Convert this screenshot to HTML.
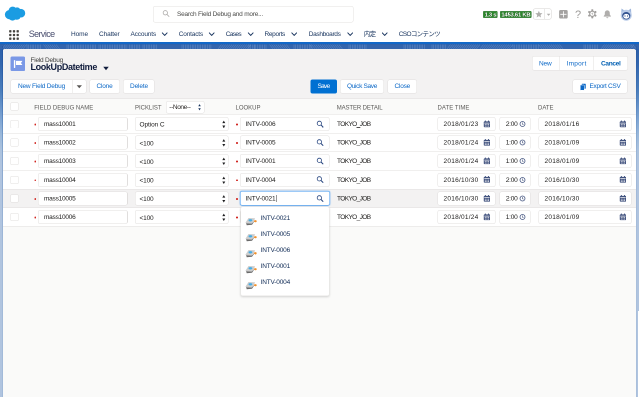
<!DOCTYPE html><html><head><meta charset="utf-8"><title>Field Debug</title><style>
html,body{margin:0;padding:0;}body{width:640px;height:400px;overflow:hidden;position:relative;background:#fff;font-family:"Liberation Sans", "Noto Sans CJK JP", sans-serif;}
#w{position:absolute;left:0;top:0;width:1280px;height:800px;transform:scale(0.5);transform-origin:0 0;overflow:hidden;will-change:transform;}
#w div,#w svg,#w span{position:absolute;box-sizing:border-box;}
#w span{white-space:nowrap;line-height:1;}
</style></head><body><div id="w">
<div style="left:0px;top:0px;width:1280px;height:84px;background:#fff;"></div>
<svg style="left:9px;top:12px" width="42" height="30" viewBox="0 0 21 15"><g fill="#1b9ce2"><circle cx="5" cy="8.6" r="4.6"/><circle cx="8.2" cy="4.8" r="4.2"/><circle cx="12.6" cy="5" r="3.6"/><circle cx="16.4" cy="7.2" r="4.3"/><circle cx="12.2" cy="9.6" r="4.2"/><circle cx="8" cy="10.4" r="4.2"/></g></svg>
<div style="left:306px;top:11.5px;width:401px;height:33px;background:#fff;border:1px solid #e2e0de;border-radius:4px;"></div>
<svg style="left:325px;top:20.4px" width="14" height="14" viewBox="0 0 14 14"><circle cx="5.6" cy="5.6" r="4.3" fill="none" stroke="#a8a6a4" stroke-width="1.5"/><path d="M8.8 8.8L13 13" stroke="#a8a6a4" stroke-width="1.6" stroke-linecap="round"/></svg>
<span class="t" style="left:354px;top:20.8px;font-size:13px;color:#4a4a48;letter-spacing:-0.41px;">Search Field Debug and more...</span>
<div style="left:966.4px;top:22px;width:28.6px;height:14px;background:#2e8c2e;border-radius:2px;border:1px solid #1d6a1d;box-shadow:inset 0 0 0 1px rgba(255,255,255,.25);"></div>
<span class="t" style="left:969.2px;top:23.19px;font-size:11.6px;color:#fff;font-weight:700;letter-spacing:-0.52px;text-shadow:0 0 2px #0b3a0b,0 0 1px #0b3a0b;">1.3 s</span>
<div style="left:1000px;top:22px;width:63px;height:14px;background:#2e8c2e;border-radius:2px;border:1px solid #1d6a1d;box-shadow:inset 0 0 0 1px rgba(255,255,255,.25);"></div>
<span class="t" style="left:1002.8px;top:23.19px;font-size:11.6px;color:#fff;font-weight:700;letter-spacing:-0.39px;text-shadow:0 0 2px #0b3a0b,0 0 1px #0b3a0b;">1453.61 KB</span>
<div style="left:1066px;top:17px;width:37px;height:22px;background:#fff;border:1px solid #d4d2d0;border-radius:4px;"></div>
<div style="left:1088px;top:17px;width:1px;height:22px;background:#d4d2d0;"></div>
<svg style="left:1069.6px;top:21.4px" width="15.4" height="14.6" viewBox="0 0 20 19"><path d="M10 0.5l2.6 6.3 6.8 0.5-5.2 4.4 1.6 6.6L10 14.8 4.2 18.3l1.6-6.6L0.6 7.3l6.8-0.5z" fill="#b0aeac"/></svg>
<svg style="left:1092.6px;top:27px" width="8.4" height="5.4" viewBox="0 0 8 5"><path d="M0.5 0.5h7L4 4.5z" fill="#b0aeac"/></svg>
<svg style="left:1118.4px;top:20px" width="17.6" height="17.2" viewBox="0 0 18 18"><rect x="0" y="0" width="18" height="18" rx="3" fill="#a3a1a0"/><path d="M9 2.500v13M2.500 9h13" stroke="#fff" stroke-width="1.700"/></svg>
<span class="t" style="left:1150px;top:17.59px;font-size:22px;color:#9c9a98;">?</span>
<svg style="left:1175.4px;top:18px" width="19.2" height="19.2" viewBox="0 0 20 20"><g fill="#a19f9d"><circle cx="10" cy="10" r="6.600"/><rect x="8" y="0.400" width="4" height="19.200" rx="1.200"/><rect x="8" y="0.400" width="4" height="19.200" rx="1.200" transform="rotate(60 10 10)"/><rect x="8" y="0.400" width="4" height="19.200" rx="1.200" transform="rotate(120 10 10)"/></g><circle cx="10" cy="10" r="4.300" fill="#fff"/><path d="M10.600 6.500l-2.600 4h1.900l-0.700 3 2.800-4.200h-2z" fill="#a19f9d"/></svg>
<svg style="left:1206px;top:19.6px" width="17.2" height="17.2" viewBox="0 0 18 18"><path d="M9 0.800c-3 0-5.200 2.300-5.200 5.300v3.300L1.600 12.600c-.4.600 0 1.400.8 1.400h13.200c.8 0 1.200-.8.800-1.400l-2.200-3.200V6.100C14.200 3.100 12 0.800 9 0.800z" fill="#b0aeac"/><path d="M6.800 15.200a2.200 2.200 0 0 0 4.400 0z" fill="#b0aeac"/></svg>
<svg style="left:1239px;top:15px" width="27" height="28" viewBox="0 0 27 28"><path d="M3.500 11l0.500-9 6.500 4.500zM23.500 11l-0.500-9-6.500 4.500z" fill="#9db5dc"/><circle cx="13.500" cy="15.500" r="11" fill="#b9cbe8"/><ellipse cx="13.500" cy="16.500" rx="8.200" ry="7.400" fill="#2f4f8e"/><ellipse cx="13.500" cy="17.600" rx="6" ry="4.800" fill="#fff"/><circle cx="11" cy="17" r="1.200" fill="#2f4f8e"/><circle cx="16" cy="17" r="1.200" fill="#2f4f8e"/></svg>
<svg style="left:18px;top:60px" width="20" height="20" viewBox="0 0 10 10"><rect x="0.15" y="0.15" width="2.300" height="2.300" rx="0.600" fill="#45433f"/><rect x="0.15" y="3.85" width="2.300" height="2.300" rx="0.600" fill="#45433f"/><rect x="0.15" y="7.550000000000001" width="2.300" height="2.300" rx="0.600" fill="#45433f"/><rect x="3.85" y="0.15" width="2.300" height="2.300" rx="0.600" fill="#45433f"/><rect x="3.85" y="3.85" width="2.300" height="2.300" rx="0.600" fill="#45433f"/><rect x="3.85" y="7.550000000000001" width="2.300" height="2.300" rx="0.600" fill="#45433f"/><rect x="7.550000000000001" y="0.15" width="2.300" height="2.300" rx="0.600" fill="#45433f"/><rect x="7.550000000000001" y="3.85" width="2.300" height="2.300" rx="0.600" fill="#45433f"/><rect x="7.550000000000001" y="7.550000000000001" width="2.300" height="2.300" rx="0.600" fill="#45433f"/></svg>
<span class="t" style="left:57.5px;top:58.77px;font-size:18px;color:#4b5070;letter-spacing:-1.22px;">Service</span>
<span class="t" style="left:142px;top:60.6px;font-size:13px;color:#16325c;letter-spacing:-0.17px;">Home</span>
<span class="t" style="left:198px;top:60.6px;font-size:13px;color:#16325c;letter-spacing:-0.23px;">Chatter</span>
<span class="t" style="left:261px;top:60.6px;font-size:13px;color:#16325c;letter-spacing:-0.31px;">Accounts</span>
<svg style="left:322.6px;top:64.4px" width="12.8" height="8.8" viewBox="0 0 6.4 4.4"><path d="M0.850 0.900L3.200 3.450L5.550 0.900" fill="none" stroke="#16325c" stroke-width="0.950" stroke-linecap="round" stroke-linejoin="round"/></svg>
<span class="t" style="left:357.5px;top:60.6px;font-size:13px;color:#16325c;letter-spacing:-0.35px;">Contacts</span>
<svg style="left:417.1px;top:64.4px" width="12.8" height="8.8" viewBox="0 0 6.4 4.4"><path d="M0.850 0.900L3.200 3.450L5.550 0.900" fill="none" stroke="#16325c" stroke-width="0.950" stroke-linecap="round" stroke-linejoin="round"/></svg>
<span class="t" style="left:451.5px;top:60.6px;font-size:13px;color:#16325c;letter-spacing:-1.27px;">Cases</span>
<svg style="left:494.6px;top:64.4px" width="12.8" height="8.8" viewBox="0 0 6.4 4.4"><path d="M0.850 0.900L3.200 3.450L5.550 0.900" fill="none" stroke="#16325c" stroke-width="0.950" stroke-linecap="round" stroke-linejoin="round"/></svg>
<span class="t" style="left:529px;top:60.6px;font-size:13px;color:#16325c;letter-spacing:-0.65px;">Reports</span>
<svg style="left:581.6px;top:64.4px" width="12.8" height="8.8" viewBox="0 0 6.4 4.4"><path d="M0.850 0.900L3.200 3.450L5.550 0.900" fill="none" stroke="#16325c" stroke-width="0.950" stroke-linecap="round" stroke-linejoin="round"/></svg>
<span class="t" style="left:617.5px;top:60.6px;font-size:13px;color:#16325c;letter-spacing:-0.66px;">Dashboards</span>
<svg style="left:693.6px;top:64.4px" width="12.8" height="8.8" viewBox="0 0 6.4 4.4"><path d="M0.850 0.900L3.200 3.450L5.550 0.900" fill="none" stroke="#16325c" stroke-width="0.950" stroke-linecap="round" stroke-linejoin="round"/></svg>
<span class="t" style="left:727.5px;top:60.6px;font-size:13px;color:#16325c;letter-spacing:-1.26px;">内定</span>
<svg style="left:762.6px;top:64.4px" width="12.8" height="8.8" viewBox="0 0 6.4 4.4"><path d="M0.850 0.900L3.200 3.450L5.550 0.900" fill="none" stroke="#16325c" stroke-width="0.950" stroke-linecap="round" stroke-linejoin="round"/></svg>
<span class="t" style="left:797.5px;top:60.6px;font-size:13px;color:#16325c;letter-spacing:-1.33px;">CSOコンテンツ</span>
<div style="left:0px;top:84px;width:1280px;height:716px;background:linear-gradient(180deg,#2b5ea7 4px,#3265ad 40px,#4a7dbb 96px,#6491c8 126px,#80a6d3 156px,#9ab8da 186px,#abc2de 216px,#b0c4df 250px);"></div>
<div style="left:0px;top:84px;width:1280px;height:4px;background:#1268c8;"></div>
<div style="left:0px;top:89px;width:1278px;height:9px;background:#3465ad;"></div>
<svg style="left:0px;top:89px" width="1280" height="9" viewBox="0 0 640 4.5"><path d="M2.0 4.500l3.5 -4.500M4.1 4.500l3.5 -4.500M6.2 4.500l3.5 -4.500M8.3 4.500l3.5 -4.500M10.4 4.500l3.5 -4.500M12.5 4.500l3.5 -4.500M14.6 4.500l3.5 -4.500M16.7 4.500l3.5 -4.500M18.8 4.500l3.5 -4.500M20.9 4.500l3.5 -4.500M23.0 4.500l3.5 -4.500M27.0 4.500l0 -4.500M28.7 4.500l0 -4.500M30.4 4.500l0 -4.500M32.1 4.500l0 -4.500M33.8 4.500l0 -4.500M35.5 4.500l0 -4.500M37.2 4.500l0 -4.500M38.9 4.500l0 -4.500M40.6 4.500l0 -4.500M47.0 4.500l-3.5 -4.500M49.1 4.500l-3.5 -4.500M51.2 4.500l-3.5 -4.500M53.3 4.500l-3.5 -4.500M55.4 4.500l-3.5 -4.500M57.5 4.500l-3.5 -4.500M59.6 4.500l-3.5 -4.500M67.0 4.500l0 -4.500M68.7 4.500l0 -4.500M70.4 4.500l0 -4.500M72.1 4.500l0 -4.500M73.8 4.500l0 -4.500M75.5 4.500l0 -4.500M77.2 4.500l0 -4.500M78.9 4.500l0 -4.500M80.6 4.500l0 -4.500M82.0 4.500l0 -4.500M83.7 4.500l0 -4.500M85.4 4.500l0 -4.500M87.1 4.500l0 -4.500M88.8 4.500l0 -4.500M90.5 4.500l0 -4.500M92.2 4.500l0 -4.500M93.9 4.500l0 -4.500M95.6 4.500l0 -4.500M99.0 4.500l0 -4.500M100.7 4.500l0 -4.500M102.4 4.500l0 -4.500M104.1 4.500l0 -4.500M105.8 4.500l0 -4.500M107.5 4.500l0 -4.500M109.2 4.500l0 -4.500M110.9 4.500l0 -4.500M112.6 4.500l0 -4.500M114.3 4.500l0 -4.500M116.0 4.500l0 -4.500M117.7 4.500l0 -4.500M119.4 4.500l0 -4.500M121.1 4.500l0 -4.500M122.8 4.500l0 -4.500M124.5 4.500l0 -4.500M126.0 4.500l0 -4.500M127.7 4.500l0 -4.500M129.4 4.500l0 -4.500M131.1 4.500l0 -4.500M132.8 4.500l0 -4.500M134.5 4.500l0 -4.500M136.2 4.500l0 -4.500M137.9 4.500l0 -4.500M139.6 4.500l0 -4.500M143.0 4.500l0 -4.500M144.7 4.500l0 -4.500M146.4 4.500l0 -4.500M148.1 4.500l0 -4.500M149.8 4.500l0 -4.500M151.5 4.500l0 -4.500M153.2 4.500l0 -4.500M154.9 4.500l0 -4.500M156.6 4.500l0 -4.500M182.0 4.500l0 -4.500M183.7 4.500l0 -4.500M185.4 4.500l0 -4.500M187.1 4.500l0 -4.500M188.8 4.500l0 -4.500M190.5 4.500l0 -4.500M192.2 4.500l0 -4.500M193.9 4.500l0 -4.500M195.6 4.500l0 -4.500M197.3 4.500l0 -4.500M199.0 4.500l0 -4.500M200.7 4.500l0 -4.500M202.4 4.500l0 -4.500M204.1 4.500l0 -4.500M205.8 4.500l0 -4.500M207.5 4.500l0 -4.500M209.2 4.500l0 -4.500M210.9 4.500l0 -4.500M218.0 4.500l3.5 -4.500M220.1 4.500l3.5 -4.500M222.2 4.500l3.5 -4.500M224.3 4.500l3.5 -4.500M226.4 4.500l3.5 -4.500M228.5 4.500l3.5 -4.500M230.6 4.500l3.5 -4.500M232.7 4.500l3.5 -4.500M234.8 4.500l3.5 -4.500M236.9 4.500l3.5 -4.500M239.0 4.500l3.5 -4.500M241.1 4.500l3.5 -4.500M243.2 4.500l3.5 -4.500M245.3 4.500l3.5 -4.500M247.4 4.500l3.5 -4.500M249.0 4.500l0 -4.500M250.7 4.500l0 -4.500M252.4 4.500l0 -4.500M254.1 4.500l0 -4.500M255.8 4.500l0 -4.500M257.5 4.500l0 -4.500M259.2 4.500l0 -4.500M260.9 4.500l0 -4.500M262.6 4.500l0 -4.500M264.3 4.500l0 -4.500M266.0 4.500l0 -4.500M273.0 4.500l-3.5 -4.500M275.1 4.500l-3.5 -4.500M277.2 4.500l-3.5 -4.500M279.3 4.500l-3.5 -4.500M281.4 4.500l-3.5 -4.500M283.5 4.500l-3.5 -4.500M285.6 4.500l-3.5 -4.500M287.7 4.500l-3.5 -4.500M289.8 4.500l-3.5 -4.500M294.0 4.500l0 -4.500M295.7 4.500l0 -4.500M297.4 4.500l0 -4.500M299.1 4.500l0 -4.500M300.8 4.500l0 -4.500M302.5 4.500l0 -4.500M304.2 4.500l0 -4.500M305.9 4.500l0 -4.500M307.6 4.500l0 -4.500M309.3 4.500l0 -4.500M311.0 4.500l0 -4.500M313.0 4.500l-3.5 -4.500M315.1 4.500l-3.5 -4.500M317.2 4.500l-3.5 -4.500M319.3 4.500l-3.5 -4.500M321.4 4.500l-3.5 -4.500M323.5 4.500l-3.5 -4.500M325.6 4.500l-3.5 -4.500M327.7 4.500l-3.5 -4.500M329.8 4.500l-3.5 -4.500M331.9 4.500l-3.5 -4.500M334.0 4.500l-3.5 -4.500M336.1 4.500l-3.5 -4.500M338.2 4.500l-3.5 -4.500M340.3 4.500l-3.5 -4.500M342.4 4.500l-3.5 -4.500M349.0 4.500l0 -4.500M350.7 4.500l0 -4.500M352.4 4.500l0 -4.500M354.1 4.500l0 -4.500M355.8 4.500l0 -4.500M357.5 4.500l0 -4.500M359.2 4.500l0 -4.500M360.9 4.500l0 -4.500M362.6 4.500l0 -4.500M364.3 4.500l0 -4.500M366.0 4.500l0 -4.500M404.0 4.500l0 -4.500M405.7 4.500l0 -4.500M407.4 4.500l0 -4.500M409.1 4.500l0 -4.500M410.8 4.500l0 -4.500M412.5 4.500l0 -4.500M414.2 4.500l0 -4.500M415.9 4.500l0 -4.500M417.6 4.500l0 -4.500M419.3 4.500l0 -4.500M421.0 4.500l0 -4.500M422.7 4.500l0 -4.500M424.4 4.500l0 -4.500M432.0 4.500l0 -4.500M433.7 4.500l0 -4.500M435.4 4.500l0 -4.500M437.1 4.500l0 -4.500M438.8 4.500l0 -4.500M440.5 4.500l0 -4.500M442.2 4.500l0 -4.500M443.9 4.500l0 -4.500M445.6 4.500l0 -4.500M447.0 4.500l3.5 -4.500M449.1 4.500l3.5 -4.500M451.2 4.500l3.5 -4.500M453.3 4.500l3.5 -4.500M455.4 4.500l3.5 -4.500M457.5 4.500l3.5 -4.500M459.6 4.500l3.5 -4.500M461.7 4.500l3.5 -4.500M463.8 4.500l3.5 -4.500M465.9 4.500l3.5 -4.500M468.0 4.500l3.5 -4.500M470.1 4.500l3.5 -4.500M472.2 4.500l3.5 -4.500M474.3 4.500l3.5 -4.500M476.4 4.500l3.5 -4.500M480.0 4.500l3.5 -4.500M482.1 4.500l3.5 -4.500M484.2 4.500l3.5 -4.500M486.3 4.500l3.5 -4.500M488.4 4.500l3.5 -4.500M490.5 4.500l3.5 -4.500M492.6 4.500l3.5 -4.500M494.7 4.500l3.5 -4.500M496.8 4.500l3.5 -4.500M498.9 4.500l3.5 -4.500M501.0 4.500l3.5 -4.500M503.1 4.500l3.5 -4.500M505.2 4.500l3.5 -4.500M507.3 4.500l3.5 -4.500M509.4 4.500l3.5 -4.500M513.0 4.500l0 -4.500M514.7 4.500l0 -4.500M516.4 4.500l0 -4.500M518.1 4.500l0 -4.500M519.8 4.500l0 -4.500M521.5 4.500l0 -4.500M523.2 4.500l0 -4.500M524.9 4.500l0 -4.500M526.6 4.500l0 -4.500M528.3 4.500l0 -4.500M530.0 4.500l0 -4.500M531.7 4.500l0 -4.500M533.4 4.500l0 -4.500M535.1 4.500l0 -4.500M536.8 4.500l0 -4.500M538.5 4.500l0 -4.500M542.0 4.500l-3.5 -4.500M544.1 4.500l-3.5 -4.500M546.2 4.500l-3.5 -4.500M548.3 4.500l-3.5 -4.500M550.4 4.500l-3.5 -4.500M552.5 4.500l-3.5 -4.500M554.6 4.500l-3.5 -4.500M556.7 4.500l-3.5 -4.500M558.8 4.500l-3.5 -4.500M560.9 4.500l-3.5 -4.500M563.0 4.500l-3.5 -4.500M584.0 4.500l0 -4.500M585.7 4.500l0 -4.500M587.4 4.500l0 -4.500M589.1 4.500l0 -4.500M590.8 4.500l0 -4.500M592.5 4.500l0 -4.500M594.2 4.500l0 -4.500M595.9 4.500l0 -4.500M597.6 4.500l0 -4.500M601.0 4.500l3.5 -4.500M603.1 4.500l3.5 -4.500M605.2 4.500l3.5 -4.500M607.3 4.500l3.5 -4.500M609.4 4.500l3.5 -4.500M611.5 4.500l3.5 -4.500M613.6 4.500l3.5 -4.500M615.7 4.500l3.5 -4.500M617.8 4.500l3.5 -4.500M619.9 4.500l3.5 -4.500M622.0 4.500l3.5 -4.500M624.1 4.500l3.5 -4.500M626.2 4.500l3.5 -4.500M628.3 4.500l3.5 -4.500M630.4 4.500l3.5 -4.500M634.0 4.500l-3.5 -4.500M636.1 4.500l-3.5 -4.500" stroke="#a9c0e2" stroke-width="0.500" opacity="0.420" fill="none"/></svg>
<div style="left:1278px;top:84px;width:2px;height:716px;background:#fff;"></div>
<div style="left:0px;top:794px;width:1280px;height:6px;background:#fff;"></div>
<div style="left:1276px;top:622px;width:4px;height:178px;background:#fff;"></div>
<div style="left:4px;top:92px;width:2.4px;height:702px;background:linear-gradient(180deg,rgba(20,70,150,.45),rgba(40,95,165,.3) 200px,rgba(60,110,175,.12) 420px);"></div>
<div style="left:1270.6px;top:92px;width:2.4px;height:702px;background:linear-gradient(180deg,rgba(20,70,150,.45),rgba(40,95,165,.3) 200px,rgba(60,110,175,.12) 420px);"></div>
<div style="left:6px;top:98px;width:1265px;height:696px;background:#fafaf9;border-radius:4px 4px 0 0;"></div>
<div style="left:6px;top:98px;width:1265px;height:100px;background:#f3f2f2;border-radius:4px 4px 0 0;border-bottom:1px solid #e0dedd;"></div>
<svg style="left:20.6px;top:113.2px" width="29.2" height="29.2" viewBox="0 0 28 28"><rect width="28" height="28" rx="3" fill="#7a98e6"/><rect x="6.500" y="7" width="2.600" height="15" rx="1" fill="#fff"/><path d="M10.500 8.500h11.500c.5 0 .7.500.4.900l-2.400 3 2.400 3c.3.400.1.900-.4.900H10.500z" fill="#fff"/></svg>
<span class="t" style="left:61px;top:113px;font-size:13px;color:#3e3e3c;letter-spacing:-0.46px;">Field Debug</span>
<span class="t" style="left:61px;top:124.77px;font-size:18px;color:#101c3c;font-weight:700;letter-spacing:-0.72px;">LookUpDatetime</span>
<svg style="left:205.5px;top:132.5px" width="12" height="8" viewBox="0 0 12 8"><path d="M0.500 0.500h11L6 7.500z" fill="#101c3c"/></svg>
<div style="left:1063.5px;top:112px;width:192px;height:29px;background:#fff;border:1px solid #e0dedd;border-radius:4px;"></div>
<div style="left:1118px;top:113px;width:1px;height:27px;background:#e0dedd;"></div>
<div style="left:1186px;top:113px;width:1px;height:27px;background:#e0dedd;"></div>
<span class="t" style="left:1078px;top:119.8px;font-size:13px;color:#0a67c6;letter-spacing:-0.34px;">New</span>
<span class="t" style="left:1133px;top:119.8px;font-size:13px;color:#0a67c6;letter-spacing:0.53px;">Import</span>
<span class="t" style="left:1202px;top:119.8px;font-size:13px;color:#005fb2;font-weight:700;letter-spacing:-0.61px;">Cancel</span>
<div style="left:21px;top:158.5px;width:124.5px;height:28.5px;background:#fff;border:1px solid #e0dedd;border-radius:4px;border-radius:4px 0 0 4px;"></div>
<div style="left:144.5px;top:158.5px;width:28px;height:28.5px;background:#fff;border:1px solid #e0dedd;border-radius:4px;border-radius:0 4px 4px 0;"></div>
<svg style="left:152.8px;top:169.6px" width="11.2" height="7.2" viewBox="0 0 10 6"><path d="M0.300 0.300h9.400L5 5.700z" fill="#5a5856"/></svg>
<span class="t" style="left:36px;top:164.6px;font-size:13px;color:#0a67c6;letter-spacing:-0.38px;">New Field Debug</span>
<div style="left:179px;top:158.5px;width:61px;height:28.5px;background:#fff;border:1px solid #e0dedd;border-radius:4px;"></div>
<span class="t" style="left:193px;top:164.6px;font-size:13px;color:#0a67c6;letter-spacing:-0.39px;">Clone</span>
<div style="left:246px;top:158.5px;width:63px;height:28.5px;background:#fff;border:1px solid #e0dedd;border-radius:4px;"></div>
<span class="t" style="left:260px;top:164.6px;font-size:13px;color:#0a67c6;letter-spacing:-0.26px;">Delete</span>
<div style="left:621px;top:158.5px;width:53px;height:28.5px;background:#0070d2;border-radius:4px;"></div>
<span class="t" style="left:635px;top:164.6px;font-size:13px;color:#fff;letter-spacing:-1.41px;">Save</span>
<div style="left:680px;top:158.5px;width:88px;height:28.5px;background:#fff;border:1px solid #e0dedd;border-radius:4px;"></div>
<span class="t" style="left:694px;top:164.6px;font-size:13px;color:#0a67c6;letter-spacing:-0.65px;">Quick Save</span>
<div style="left:775px;top:158.5px;width:59px;height:28.5px;background:#fff;border:1px solid #e0dedd;border-radius:4px;"></div>
<span class="t" style="left:789px;top:164.6px;font-size:13px;color:#0a67c6;letter-spacing:-0.45px;">Close</span>
<div style="left:1145px;top:158.5px;width:110px;height:28.5px;background:#fff;border:1px solid #e0dedd;border-radius:4px;"></div>
<span class="t" style="left:1179px;top:164.6px;font-size:13px;color:#0a67c6;letter-spacing:-0.59px;">Export CSV</span>
<svg style="left:1160px;top:167px" width="12" height="14" viewBox="0 0 12 14"><rect x="3.500" y="0.500" width="8" height="10" rx="1" fill="#0a67c6"/><rect x="0.500" y="3" width="8" height="10.500" rx="1" fill="#0a67c6" stroke="#fff" stroke-width="1"/></svg>
<div style="left:6px;top:198px;width:1265px;height:30.5px;background:#fafaf9;border-bottom:1px solid #e0dedd;"></div>
<div style="left:20.5px;top:205px;width:16px;height:16px;background:#fff;border:1px solid #e0dedd;border-radius:2px;"></div>
<span class="t" style="left:68.5px;top:209.05px;font-size:12px;color:#5a5957;letter-spacing:-0.00px;">FIELD DEBUG NAME</span>
<span class="t" style="left:270px;top:209.05px;font-size:12px;color:#5a5957;letter-spacing:-0.04px;">PICKLIST</span>
<span class="t" style="left:471px;top:209.05px;font-size:12px;color:#5a5957;letter-spacing:-0.00px;">LOOKUP</span>
<span class="t" style="left:673.5px;top:209.05px;font-size:12px;color:#5a5957;letter-spacing:-0.23px;">MASTER DETAIL</span>
<span class="t" style="left:875px;top:209.05px;font-size:12px;color:#5a5957;letter-spacing:0.12px;">DATE TIME</span>
<span class="t" style="left:1076px;top:209.05px;font-size:12px;color:#5a5957;letter-spacing:-0.03px;">DATE</span>
<div style="left:331.5px;top:201.5px;width:77px;height:25px;background:#fff;border:1px solid #e0dedd;border-radius:4px;"></div>
<span class="t" style="left:338.6px;top:207.4px;font-size:13px;color:#2b2826;letter-spacing:-0.75px;">--None--</span>
<svg style="left:395.54px;top:208.34px" width="6.12" height="12.92" viewBox="0 0 7.2 15.2"><path d="M3.600 0.300L6.600 5.300H0.600z M3.600 14.900L0.600 9.900H6.600z" fill="#16325c"/></svg>
<div style="left:6px;top:229px;width:1265px;height:38px;background:#fff;border-bottom:1px solid #e0dedd;"></div>
<div style="left:20.5px;top:239.8px;width:16px;height:16px;background:#fff;border:1px solid #e0dedd;border-radius:2px;"></div>
<div style="left:68.8px;top:247px;width:3.6px;height:3.6px;background:#d0211c;border-radius:50%;"></div>
<div style="left:76px;top:234px;width:179px;height:28px;background:#fff;border:1px solid #e0dedd;border-radius:4px;"></div>
<span class="t" style="left:88px;top:241px;font-size:13px;color:#1c1b1a;letter-spacing:-0.47px;">mass10001</span>
<div style="left:270px;top:234px;width:187px;height:28px;background:#fff;border:1px solid #e0dedd;border-radius:4px;"></div>
<span class="t" style="left:279px;top:242.4px;font-size:13px;color:#1c1b1a;letter-spacing:-0.16px;">Option C</span>
<svg style="left:443.6px;top:240.8px" width="7.2" height="15.2" viewBox="0 0 7.2 15.2"><path d="M3.600 0.300L6.600 5.300H0.600z M3.600 14.900L0.600 9.900H6.600z" fill="#1d1d1f"/></svg>
<div style="left:472.4px;top:247px;width:3.6px;height:3.6px;background:#d0211c;border-radius:50%;"></div>
<div style="left:480px;top:234px;width:179px;height:28px;background:#fff;border:1px solid #e0dedd;border-radius:4px;"></div>
<span class="t" style="left:491px;top:241px;font-size:13px;color:#1c1b1a;letter-spacing:-0.24px;">INTV-0006</span>
<svg style="left:633.2px;top:240.6px" width="14" height="14" viewBox="0 0 13 13"><circle cx="5.300" cy="5.300" r="4" fill="none" stroke="#27457f" stroke-width="1.450"/><path d="M8.400 8.400L11.900 11.900" stroke="#27457f" stroke-width="1.900" stroke-linecap="round"/></svg>
<span class="t" style="left:674px;top:241px;font-size:13px;color:#1c1b1a;letter-spacing:-1.20px;">TOKYO_JOB</span>
<div style="left:875px;top:234px;width:116px;height:28px;background:#fff;border:1px solid #e0dedd;border-radius:4px;"></div>
<span class="t" style="left:887px;top:241px;font-size:13px;color:#1c1b1a;letter-spacing:0.49px;">2018/01/23</span>
<svg style="left:966.6px;top:240.6px" width="13.8" height="14.6" viewBox="0 0 13 13.6"><rect x="0.500" y="1.500" width="12" height="11" rx="1.500" fill="#41527e"/><rect x="2.500" y="0" width="2" height="3" rx="0.800" fill="#41527e"/><rect x="8.500" y="0" width="2" height="3" rx="0.800" fill="#41527e"/><rect x="1.500" y="4.200" width="10" height="1.300" fill="#fff"/><g fill="#fff"><rect x="2.500" y="7" width="1.800" height="1.500"/><rect x="5.600" y="7" width="1.800" height="1.500"/><rect x="8.700" y="7" width="1.800" height="1.500"/><rect x="2.500" y="9.700" width="1.800" height="1.500"/><rect x="5.600" y="9.700" width="1.800" height="1.500"/><rect x="8.700" y="9.700" width="1.800" height="1.500"/></g></svg>
<div style="left:999px;top:234px;width:62px;height:28px;background:#fff;border:1px solid #e0dedd;border-radius:4px;"></div>
<span class="t" style="left:1011.5px;top:241px;font-size:13px;color:#1c1b1a;letter-spacing:-0.45px;">2:00</span>
<svg style="left:1039px;top:241.8px" width="12" height="12" viewBox="0 0 12 12"><circle cx="6" cy="6" r="5" fill="none" stroke="#41527e" stroke-width="1.500"/><path d="M6 3v3.300l2 1.200" fill="none" stroke="#41527e" stroke-width="1.200"/></svg>
<div style="left:1077px;top:234px;width:186px;height:28px;background:#fff;border:1px solid #e0dedd;border-radius:4px;"></div>
<span class="t" style="left:1089px;top:241px;font-size:13px;color:#1c1b1a;letter-spacing:0.49px;">2018/01/16</span>
<svg style="left:1238.6px;top:240.6px" width="13.8" height="14.6" viewBox="0 0 13 13.6"><rect x="0.500" y="1.500" width="12" height="11" rx="1.500" fill="#41527e"/><rect x="2.500" y="0" width="2" height="3" rx="0.800" fill="#41527e"/><rect x="8.500" y="0" width="2" height="3" rx="0.800" fill="#41527e"/><rect x="1.500" y="4.200" width="10" height="1.300" fill="#fff"/><g fill="#fff"><rect x="2.500" y="7" width="1.800" height="1.500"/><rect x="5.600" y="7" width="1.800" height="1.500"/><rect x="8.700" y="7" width="1.800" height="1.500"/><rect x="2.500" y="9.700" width="1.800" height="1.500"/><rect x="5.600" y="9.700" width="1.800" height="1.500"/><rect x="8.700" y="9.700" width="1.800" height="1.500"/></g></svg>
<div style="left:6px;top:267px;width:1265px;height:37.24px;background:#fff;border-bottom:1px solid #e0dedd;"></div>
<div style="left:20.5px;top:277.04px;width:16px;height:16px;background:#fff;border:1px solid #e0dedd;border-radius:2px;"></div>
<div style="left:68.8px;top:284.24px;width:3.6px;height:3.6px;background:#d0211c;border-radius:50%;"></div>
<div style="left:76px;top:271.24px;width:179px;height:28px;background:#fff;border:1px solid #e0dedd;border-radius:4px;"></div>
<span class="t" style="left:88px;top:278.24px;font-size:13px;color:#1c1b1a;letter-spacing:-0.47px;">mass10002</span>
<div style="left:270px;top:271.24px;width:187px;height:28px;background:#fff;border:1px solid #e0dedd;border-radius:4px;"></div>
<span class="t" style="left:279px;top:279.64px;font-size:13px;color:#1c1b1a;letter-spacing:-0.32px;">&lt;100</span>
<svg style="left:443.6px;top:278.04px" width="7.2" height="15.2" viewBox="0 0 7.2 15.2"><path d="M3.600 0.300L6.600 5.300H0.600z M3.600 14.900L0.600 9.900H6.600z" fill="#1d1d1f"/></svg>
<div style="left:472.4px;top:284.24px;width:3.6px;height:3.6px;background:#d0211c;border-radius:50%;"></div>
<div style="left:480px;top:271.24px;width:179px;height:28px;background:#fff;border:1px solid #e0dedd;border-radius:4px;"></div>
<span class="t" style="left:491px;top:278.24px;font-size:13px;color:#1c1b1a;letter-spacing:-0.24px;">INTV-0005</span>
<svg style="left:633.2px;top:277.84px" width="14" height="14" viewBox="0 0 13 13"><circle cx="5.300" cy="5.300" r="4" fill="none" stroke="#27457f" stroke-width="1.450"/><path d="M8.400 8.400L11.900 11.900" stroke="#27457f" stroke-width="1.900" stroke-linecap="round"/></svg>
<span class="t" style="left:674px;top:278.24px;font-size:13px;color:#1c1b1a;letter-spacing:-1.20px;">TOKYO_JOB</span>
<div style="left:875px;top:271.24px;width:116px;height:28px;background:#fff;border:1px solid #e0dedd;border-radius:4px;"></div>
<span class="t" style="left:887px;top:278.24px;font-size:13px;color:#1c1b1a;letter-spacing:0.49px;">2018/01/24</span>
<svg style="left:966.6px;top:277.84px" width="13.8" height="14.6" viewBox="0 0 13 13.6"><rect x="0.500" y="1.500" width="12" height="11" rx="1.500" fill="#41527e"/><rect x="2.500" y="0" width="2" height="3" rx="0.800" fill="#41527e"/><rect x="8.500" y="0" width="2" height="3" rx="0.800" fill="#41527e"/><rect x="1.500" y="4.200" width="10" height="1.300" fill="#fff"/><g fill="#fff"><rect x="2.500" y="7" width="1.800" height="1.500"/><rect x="5.600" y="7" width="1.800" height="1.500"/><rect x="8.700" y="7" width="1.800" height="1.500"/><rect x="2.500" y="9.700" width="1.800" height="1.500"/><rect x="5.600" y="9.700" width="1.800" height="1.500"/><rect x="8.700" y="9.700" width="1.800" height="1.500"/></g></svg>
<div style="left:999px;top:271.24px;width:62px;height:28px;background:#fff;border:1px solid #e0dedd;border-radius:4px;"></div>
<span class="t" style="left:1011.5px;top:278.24px;font-size:13px;color:#1c1b1a;letter-spacing:-0.45px;">1:00</span>
<svg style="left:1039px;top:279.04px" width="12" height="12" viewBox="0 0 12 12"><circle cx="6" cy="6" r="5" fill="none" stroke="#41527e" stroke-width="1.500"/><path d="M6 3v3.300l2 1.200" fill="none" stroke="#41527e" stroke-width="1.200"/></svg>
<div style="left:1077px;top:271.24px;width:186px;height:28px;background:#fff;border:1px solid #e0dedd;border-radius:4px;"></div>
<span class="t" style="left:1089px;top:278.24px;font-size:13px;color:#1c1b1a;letter-spacing:0.49px;">2018/01/09</span>
<svg style="left:1238.6px;top:277.84px" width="13.8" height="14.6" viewBox="0 0 13 13.6"><rect x="0.500" y="1.500" width="12" height="11" rx="1.500" fill="#41527e"/><rect x="2.500" y="0" width="2" height="3" rx="0.800" fill="#41527e"/><rect x="8.500" y="0" width="2" height="3" rx="0.800" fill="#41527e"/><rect x="1.500" y="4.200" width="10" height="1.300" fill="#fff"/><g fill="#fff"><rect x="2.500" y="7" width="1.800" height="1.500"/><rect x="5.600" y="7" width="1.800" height="1.500"/><rect x="8.700" y="7" width="1.800" height="1.500"/><rect x="2.500" y="9.700" width="1.800" height="1.500"/><rect x="5.600" y="9.700" width="1.800" height="1.500"/><rect x="8.700" y="9.700" width="1.800" height="1.500"/></g></svg>
<div style="left:6px;top:304.24px;width:1265px;height:37.24px;background:#fff;border-bottom:1px solid #e0dedd;"></div>
<div style="left:20.5px;top:314.28px;width:16px;height:16px;background:#fff;border:1px solid #e0dedd;border-radius:2px;"></div>
<div style="left:68.8px;top:321.48px;width:3.6px;height:3.6px;background:#d0211c;border-radius:50%;"></div>
<div style="left:76px;top:308.48px;width:179px;height:28px;background:#fff;border:1px solid #e0dedd;border-radius:4px;"></div>
<span class="t" style="left:88px;top:315.48px;font-size:13px;color:#1c1b1a;letter-spacing:-0.47px;">mass10003</span>
<div style="left:270px;top:308.48px;width:187px;height:28px;background:#fff;border:1px solid #e0dedd;border-radius:4px;"></div>
<span class="t" style="left:279px;top:316.88px;font-size:13px;color:#1c1b1a;letter-spacing:-0.32px;">&lt;100</span>
<svg style="left:443.6px;top:315.28px" width="7.2" height="15.2" viewBox="0 0 7.2 15.2"><path d="M3.600 0.300L6.600 5.300H0.600z M3.600 14.900L0.600 9.900H6.600z" fill="#1d1d1f"/></svg>
<div style="left:472.4px;top:321.48px;width:3.6px;height:3.6px;background:#d0211c;border-radius:50%;"></div>
<div style="left:480px;top:308.48px;width:179px;height:28px;background:#fff;border:1px solid #e0dedd;border-radius:4px;"></div>
<span class="t" style="left:491px;top:315.48px;font-size:13px;color:#1c1b1a;letter-spacing:-0.24px;">INTV-0001</span>
<svg style="left:633.2px;top:315.08px" width="14" height="14" viewBox="0 0 13 13"><circle cx="5.300" cy="5.300" r="4" fill="none" stroke="#27457f" stroke-width="1.450"/><path d="M8.400 8.400L11.900 11.900" stroke="#27457f" stroke-width="1.900" stroke-linecap="round"/></svg>
<span class="t" style="left:674px;top:315.48px;font-size:13px;color:#1c1b1a;letter-spacing:-1.20px;">TOKYO_JOB</span>
<div style="left:875px;top:308.48px;width:116px;height:28px;background:#fff;border:1px solid #e0dedd;border-radius:4px;"></div>
<span class="t" style="left:887px;top:315.48px;font-size:13px;color:#1c1b1a;letter-spacing:0.49px;">2018/01/24</span>
<svg style="left:966.6px;top:315.08px" width="13.8" height="14.6" viewBox="0 0 13 13.6"><rect x="0.500" y="1.500" width="12" height="11" rx="1.500" fill="#41527e"/><rect x="2.500" y="0" width="2" height="3" rx="0.800" fill="#41527e"/><rect x="8.500" y="0" width="2" height="3" rx="0.800" fill="#41527e"/><rect x="1.500" y="4.200" width="10" height="1.300" fill="#fff"/><g fill="#fff"><rect x="2.500" y="7" width="1.800" height="1.500"/><rect x="5.600" y="7" width="1.800" height="1.500"/><rect x="8.700" y="7" width="1.800" height="1.500"/><rect x="2.500" y="9.700" width="1.800" height="1.500"/><rect x="5.600" y="9.700" width="1.800" height="1.500"/><rect x="8.700" y="9.700" width="1.800" height="1.500"/></g></svg>
<div style="left:999px;top:308.48px;width:62px;height:28px;background:#fff;border:1px solid #e0dedd;border-radius:4px;"></div>
<span class="t" style="left:1011.5px;top:315.48px;font-size:13px;color:#1c1b1a;letter-spacing:-0.45px;">1:00</span>
<svg style="left:1039px;top:316.28px" width="12" height="12" viewBox="0 0 12 12"><circle cx="6" cy="6" r="5" fill="none" stroke="#41527e" stroke-width="1.500"/><path d="M6 3v3.300l2 1.200" fill="none" stroke="#41527e" stroke-width="1.200"/></svg>
<div style="left:1077px;top:308.48px;width:186px;height:28px;background:#fff;border:1px solid #e0dedd;border-radius:4px;"></div>
<span class="t" style="left:1089px;top:315.48px;font-size:13px;color:#1c1b1a;letter-spacing:0.49px;">2018/01/09</span>
<svg style="left:1238.6px;top:315.08px" width="13.8" height="14.6" viewBox="0 0 13 13.6"><rect x="0.500" y="1.500" width="12" height="11" rx="1.500" fill="#41527e"/><rect x="2.500" y="0" width="2" height="3" rx="0.800" fill="#41527e"/><rect x="8.500" y="0" width="2" height="3" rx="0.800" fill="#41527e"/><rect x="1.500" y="4.200" width="10" height="1.300" fill="#fff"/><g fill="#fff"><rect x="2.500" y="7" width="1.800" height="1.500"/><rect x="5.600" y="7" width="1.800" height="1.500"/><rect x="8.700" y="7" width="1.800" height="1.500"/><rect x="2.500" y="9.700" width="1.800" height="1.500"/><rect x="5.600" y="9.700" width="1.800" height="1.500"/><rect x="8.700" y="9.700" width="1.800" height="1.500"/></g></svg>
<div style="left:6px;top:341.48px;width:1265px;height:37.24px;background:#fff;border-bottom:1px solid #e0dedd;"></div>
<div style="left:20.5px;top:351.52px;width:16px;height:16px;background:#fff;border:1px solid #e0dedd;border-radius:2px;"></div>
<div style="left:68.8px;top:358.72px;width:3.6px;height:3.6px;background:#d0211c;border-radius:50%;"></div>
<div style="left:76px;top:345.72px;width:179px;height:28px;background:#fff;border:1px solid #e0dedd;border-radius:4px;"></div>
<span class="t" style="left:88px;top:352.72px;font-size:13px;color:#1c1b1a;letter-spacing:-0.47px;">mass10004</span>
<div style="left:270px;top:345.72px;width:187px;height:28px;background:#fff;border:1px solid #e0dedd;border-radius:4px;"></div>
<span class="t" style="left:279px;top:354.12px;font-size:13px;color:#1c1b1a;letter-spacing:-0.32px;">&lt;100</span>
<svg style="left:443.6px;top:352.52px" width="7.2" height="15.2" viewBox="0 0 7.2 15.2"><path d="M3.600 0.300L6.600 5.300H0.600z M3.600 14.900L0.600 9.900H6.600z" fill="#1d1d1f"/></svg>
<div style="left:472.4px;top:358.72px;width:3.6px;height:3.6px;background:#d0211c;border-radius:50%;"></div>
<div style="left:480px;top:345.72px;width:179px;height:28px;background:#fff;border:1px solid #e0dedd;border-radius:4px;"></div>
<span class="t" style="left:491px;top:352.72px;font-size:13px;color:#1c1b1a;letter-spacing:-0.24px;">INTV-0004</span>
<svg style="left:633.2px;top:352.32px" width="14" height="14" viewBox="0 0 13 13"><circle cx="5.300" cy="5.300" r="4" fill="none" stroke="#27457f" stroke-width="1.450"/><path d="M8.400 8.400L11.900 11.900" stroke="#27457f" stroke-width="1.900" stroke-linecap="round"/></svg>
<span class="t" style="left:674px;top:352.72px;font-size:13px;color:#1c1b1a;letter-spacing:-1.20px;">TOKYO_JOB</span>
<div style="left:875px;top:345.72px;width:116px;height:28px;background:#fff;border:1px solid #e0dedd;border-radius:4px;"></div>
<span class="t" style="left:887px;top:352.72px;font-size:13px;color:#1c1b1a;letter-spacing:0.49px;">2016/10/30</span>
<svg style="left:966.6px;top:352.32px" width="13.8" height="14.6" viewBox="0 0 13 13.6"><rect x="0.500" y="1.500" width="12" height="11" rx="1.500" fill="#41527e"/><rect x="2.500" y="0" width="2" height="3" rx="0.800" fill="#41527e"/><rect x="8.500" y="0" width="2" height="3" rx="0.800" fill="#41527e"/><rect x="1.500" y="4.200" width="10" height="1.300" fill="#fff"/><g fill="#fff"><rect x="2.500" y="7" width="1.800" height="1.500"/><rect x="5.600" y="7" width="1.800" height="1.500"/><rect x="8.700" y="7" width="1.800" height="1.500"/><rect x="2.500" y="9.700" width="1.800" height="1.500"/><rect x="5.600" y="9.700" width="1.800" height="1.500"/><rect x="8.700" y="9.700" width="1.800" height="1.500"/></g></svg>
<div style="left:999px;top:345.72px;width:62px;height:28px;background:#fff;border:1px solid #e0dedd;border-radius:4px;"></div>
<span class="t" style="left:1011.5px;top:352.72px;font-size:13px;color:#1c1b1a;letter-spacing:-0.45px;">2:00</span>
<svg style="left:1039px;top:353.52px" width="12" height="12" viewBox="0 0 12 12"><circle cx="6" cy="6" r="5" fill="none" stroke="#41527e" stroke-width="1.500"/><path d="M6 3v3.300l2 1.200" fill="none" stroke="#41527e" stroke-width="1.200"/></svg>
<div style="left:1077px;top:345.72px;width:186px;height:28px;background:#fff;border:1px solid #e0dedd;border-radius:4px;"></div>
<span class="t" style="left:1089px;top:352.72px;font-size:13px;color:#1c1b1a;letter-spacing:0.49px;">2016/10/30</span>
<svg style="left:1238.6px;top:352.32px" width="13.8" height="14.6" viewBox="0 0 13 13.6"><rect x="0.500" y="1.500" width="12" height="11" rx="1.500" fill="#41527e"/><rect x="2.500" y="0" width="2" height="3" rx="0.800" fill="#41527e"/><rect x="8.500" y="0" width="2" height="3" rx="0.800" fill="#41527e"/><rect x="1.500" y="4.200" width="10" height="1.300" fill="#fff"/><g fill="#fff"><rect x="2.500" y="7" width="1.800" height="1.500"/><rect x="5.600" y="7" width="1.800" height="1.500"/><rect x="8.700" y="7" width="1.800" height="1.500"/><rect x="2.500" y="9.700" width="1.800" height="1.500"/><rect x="5.600" y="9.700" width="1.800" height="1.500"/><rect x="8.700" y="9.700" width="1.800" height="1.500"/></g></svg>
<div style="left:6px;top:378.72px;width:1265px;height:37.24px;background:#f3f2f2;border-bottom:1px solid #e0dedd;"></div>
<div style="left:20.5px;top:388.76px;width:16px;height:16px;background:#fff;border:1px solid #e0dedd;border-radius:2px;"></div>
<div style="left:68.8px;top:395.96px;width:3.6px;height:3.6px;background:#d0211c;border-radius:50%;"></div>
<div style="left:76px;top:382.96px;width:179px;height:28px;background:#fff;border:1px solid #e0dedd;border-radius:4px;"></div>
<span class="t" style="left:88px;top:389.96px;font-size:13px;color:#1c1b1a;letter-spacing:-0.47px;">mass10005</span>
<div style="left:270px;top:382.96px;width:187px;height:28px;background:#fff;border:1px solid #e0dedd;border-radius:4px;"></div>
<span class="t" style="left:279px;top:391.36px;font-size:13px;color:#1c1b1a;letter-spacing:-0.32px;">&lt;100</span>
<svg style="left:443.6px;top:389.76px" width="7.2" height="15.2" viewBox="0 0 7.2 15.2"><path d="M3.600 0.300L6.600 5.300H0.600z M3.600 14.900L0.600 9.900H6.600z" fill="#1d1d1f"/></svg>
<div style="left:472.4px;top:395.96px;width:3.6px;height:3.6px;background:#d0211c;border-radius:50%;"></div>
<div style="left:479.5px;top:382.46px;width:180px;height:29px;background:#fff;border:1.500px solid #3a94ee;border-radius:4px;box-shadow:0 0 3px #3a94ee;"></div>
<div style="left:553.2px;top:389.76px;width:1px;height:14px;background:#333;"></div>
<span class="t" style="left:491px;top:389.96px;font-size:13px;color:#1c1b1a;letter-spacing:-0.24px;">INTV-0021</span>
<svg style="left:633.2px;top:389.56px" width="14" height="14" viewBox="0 0 13 13"><circle cx="5.300" cy="5.300" r="4" fill="none" stroke="#27457f" stroke-width="1.450"/><path d="M8.400 8.400L11.900 11.900" stroke="#27457f" stroke-width="1.900" stroke-linecap="round"/></svg>
<span class="t" style="left:674px;top:389.96px;font-size:13px;color:#1c1b1a;letter-spacing:-1.20px;">TOKYO_JOB</span>
<div style="left:875px;top:382.96px;width:116px;height:28px;background:#fff;border:1px solid #e0dedd;border-radius:4px;"></div>
<span class="t" style="left:887px;top:389.96px;font-size:13px;color:#1c1b1a;letter-spacing:0.49px;">2016/10/30</span>
<svg style="left:966.6px;top:389.56px" width="13.8" height="14.6" viewBox="0 0 13 13.6"><rect x="0.500" y="1.500" width="12" height="11" rx="1.500" fill="#41527e"/><rect x="2.500" y="0" width="2" height="3" rx="0.800" fill="#41527e"/><rect x="8.500" y="0" width="2" height="3" rx="0.800" fill="#41527e"/><rect x="1.500" y="4.200" width="10" height="1.300" fill="#fff"/><g fill="#fff"><rect x="2.500" y="7" width="1.800" height="1.500"/><rect x="5.600" y="7" width="1.800" height="1.500"/><rect x="8.700" y="7" width="1.800" height="1.500"/><rect x="2.500" y="9.700" width="1.800" height="1.500"/><rect x="5.600" y="9.700" width="1.800" height="1.500"/><rect x="8.700" y="9.700" width="1.800" height="1.500"/></g></svg>
<div style="left:999px;top:382.96px;width:62px;height:28px;background:#fff;border:1px solid #e0dedd;border-radius:4px;"></div>
<span class="t" style="left:1011.5px;top:389.96px;font-size:13px;color:#1c1b1a;letter-spacing:-0.45px;">2:00</span>
<svg style="left:1039px;top:390.76px" width="12" height="12" viewBox="0 0 12 12"><circle cx="6" cy="6" r="5" fill="none" stroke="#41527e" stroke-width="1.500"/><path d="M6 3v3.300l2 1.200" fill="none" stroke="#41527e" stroke-width="1.200"/></svg>
<div style="left:1077px;top:382.96px;width:186px;height:28px;background:#fff;border:1px solid #e0dedd;border-radius:4px;"></div>
<span class="t" style="left:1089px;top:389.96px;font-size:13px;color:#1c1b1a;letter-spacing:0.49px;">2016/10/30</span>
<svg style="left:1238.6px;top:389.56px" width="13.8" height="14.6" viewBox="0 0 13 13.6"><rect x="0.500" y="1.500" width="12" height="11" rx="1.500" fill="#41527e"/><rect x="2.500" y="0" width="2" height="3" rx="0.800" fill="#41527e"/><rect x="8.500" y="0" width="2" height="3" rx="0.800" fill="#41527e"/><rect x="1.500" y="4.200" width="10" height="1.300" fill="#fff"/><g fill="#fff"><rect x="2.500" y="7" width="1.800" height="1.500"/><rect x="5.600" y="7" width="1.800" height="1.500"/><rect x="8.700" y="7" width="1.800" height="1.500"/><rect x="2.500" y="9.700" width="1.800" height="1.500"/><rect x="5.600" y="9.700" width="1.800" height="1.500"/><rect x="8.700" y="9.700" width="1.800" height="1.500"/></g></svg>
<div style="left:6px;top:415.96px;width:1265px;height:37.24px;background:#fff;border-bottom:1px solid #e0dedd;"></div>
<div style="left:20.5px;top:426px;width:16px;height:16px;background:#fff;border:1px solid #e0dedd;border-radius:2px;"></div>
<div style="left:68.8px;top:433.2px;width:3.6px;height:3.6px;background:#d0211c;border-radius:50%;"></div>
<div style="left:76px;top:420.2px;width:179px;height:28px;background:#fff;border:1px solid #e0dedd;border-radius:4px;"></div>
<span class="t" style="left:88px;top:427.2px;font-size:13px;color:#1c1b1a;letter-spacing:-0.47px;">mass10006</span>
<div style="left:270px;top:420.2px;width:187px;height:28px;background:#fff;border:1px solid #e0dedd;border-radius:4px;"></div>
<span class="t" style="left:279px;top:428.6px;font-size:13px;color:#1c1b1a;letter-spacing:-0.32px;">&lt;100</span>
<svg style="left:443.6px;top:427px" width="7.2" height="15.2" viewBox="0 0 7.2 15.2"><path d="M3.600 0.300L6.600 5.300H0.600z M3.600 14.900L0.600 9.900H6.600z" fill="#1d1d1f"/></svg>
<div style="left:472.4px;top:433.2px;width:3.6px;height:3.6px;background:#d0211c;border-radius:50%;"></div>
<div style="left:480px;top:420.2px;width:179px;height:28px;background:#fff;border:1px solid #e0dedd;border-radius:4px;"></div>
<span class="t" style="left:491px;top:427.2px;font-size:13px;color:#1c1b1a;letter-spacing:-0.24px;">INTV-0006</span>
<svg style="left:633.2px;top:426.8px" width="14" height="14" viewBox="0 0 13 13"><circle cx="5.300" cy="5.300" r="4" fill="none" stroke="#27457f" stroke-width="1.450"/><path d="M8.400 8.400L11.900 11.900" stroke="#27457f" stroke-width="1.900" stroke-linecap="round"/></svg>
<span class="t" style="left:674px;top:427.2px;font-size:13px;color:#1c1b1a;letter-spacing:-1.20px;">TOKYO_JOB</span>
<div style="left:875px;top:420.2px;width:116px;height:28px;background:#fff;border:1px solid #e0dedd;border-radius:4px;"></div>
<span class="t" style="left:887px;top:427.2px;font-size:13px;color:#1c1b1a;letter-spacing:0.49px;">2018/01/24</span>
<svg style="left:966.6px;top:426.8px" width="13.8" height="14.6" viewBox="0 0 13 13.6"><rect x="0.500" y="1.500" width="12" height="11" rx="1.500" fill="#41527e"/><rect x="2.500" y="0" width="2" height="3" rx="0.800" fill="#41527e"/><rect x="8.500" y="0" width="2" height="3" rx="0.800" fill="#41527e"/><rect x="1.500" y="4.200" width="10" height="1.300" fill="#fff"/><g fill="#fff"><rect x="2.500" y="7" width="1.800" height="1.500"/><rect x="5.600" y="7" width="1.800" height="1.500"/><rect x="8.700" y="7" width="1.800" height="1.500"/><rect x="2.500" y="9.700" width="1.800" height="1.500"/><rect x="5.600" y="9.700" width="1.800" height="1.500"/><rect x="8.700" y="9.700" width="1.800" height="1.500"/></g></svg>
<div style="left:999px;top:420.2px;width:62px;height:28px;background:#fff;border:1px solid #e0dedd;border-radius:4px;"></div>
<span class="t" style="left:1011.5px;top:427.2px;font-size:13px;color:#1c1b1a;letter-spacing:-0.45px;">1:00</span>
<svg style="left:1039px;top:428px" width="12" height="12" viewBox="0 0 12 12"><circle cx="6" cy="6" r="5" fill="none" stroke="#41527e" stroke-width="1.500"/><path d="M6 3v3.300l2 1.200" fill="none" stroke="#41527e" stroke-width="1.200"/></svg>
<div style="left:1077px;top:420.2px;width:186px;height:28px;background:#fff;border:1px solid #e0dedd;border-radius:4px;"></div>
<span class="t" style="left:1089px;top:427.2px;font-size:13px;color:#1c1b1a;letter-spacing:0.49px;">2018/01/09</span>
<svg style="left:1238.6px;top:426.8px" width="13.8" height="14.6" viewBox="0 0 13 13.6"><rect x="0.500" y="1.500" width="12" height="11" rx="1.500" fill="#41527e"/><rect x="2.500" y="0" width="2" height="3" rx="0.800" fill="#41527e"/><rect x="8.500" y="0" width="2" height="3" rx="0.800" fill="#41527e"/><rect x="1.500" y="4.200" width="10" height="1.300" fill="#fff"/><g fill="#fff"><rect x="2.500" y="7" width="1.800" height="1.500"/><rect x="5.600" y="7" width="1.800" height="1.500"/><rect x="8.700" y="7" width="1.800" height="1.500"/><rect x="2.500" y="9.700" width="1.800" height="1.500"/><rect x="5.600" y="9.700" width="1.800" height="1.500"/><rect x="8.700" y="9.700" width="1.800" height="1.500"/></g></svg>
<div style="left:481px;top:413px;width:177.5px;height:179px;background:#fff;border:1px solid #e6e5e3;border-radius:4px;box-shadow:0 2px 4px rgba(0,0,0,0.16);"></div>
<span class="t" style="left:521.2px;top:429.4px;font-size:13px;color:#0f2a55;letter-spacing:-0.37px;">INTV-0021</span>
<svg style="left:491.2px;top:435.4px" width="23" height="16" viewBox="0 0 23 16"><path d="M0.500 9.500L2.500 15.600 13 14.600 17.500 8z" fill="#6b6b6b"/><path d="M0.500 9.500L6 1 18 1.500 16.800 8.200 12.500 12.200 1.500 11.800z" fill="#cdcdcd"/><ellipse cx="9.800" cy="5.600" rx="3.800" ry="2.400" fill="#45aee6"/><ellipse cx="19.600" cy="7.400" rx="2.800" ry="2.100" fill="#f0902e"/></svg>
<span class="t" style="left:521.2px;top:461.4px;font-size:13px;color:#0f2a55;letter-spacing:-0.37px;">INTV-0005</span>
<svg style="left:491.2px;top:467.4px" width="23" height="16" viewBox="0 0 23 16"><path d="M0.500 9.500L2.500 15.600 13 14.600 17.500 8z" fill="#6b6b6b"/><path d="M0.500 9.500L6 1 18 1.500 16.800 8.200 12.500 12.200 1.500 11.800z" fill="#cdcdcd"/><ellipse cx="9.800" cy="5.600" rx="3.800" ry="2.400" fill="#45aee6"/><ellipse cx="19.600" cy="7.400" rx="2.800" ry="2.100" fill="#f0902e"/></svg>
<span class="t" style="left:521.2px;top:493.4px;font-size:13px;color:#0f2a55;letter-spacing:-0.37px;">INTV-0006</span>
<svg style="left:491.2px;top:499.4px" width="23" height="16" viewBox="0 0 23 16"><path d="M0.500 9.500L2.500 15.600 13 14.600 17.500 8z" fill="#6b6b6b"/><path d="M0.500 9.500L6 1 18 1.500 16.800 8.200 12.500 12.200 1.500 11.800z" fill="#cdcdcd"/><ellipse cx="9.800" cy="5.600" rx="3.800" ry="2.400" fill="#45aee6"/><ellipse cx="19.600" cy="7.400" rx="2.800" ry="2.100" fill="#f0902e"/></svg>
<span class="t" style="left:521.2px;top:525.4px;font-size:13px;color:#0f2a55;letter-spacing:-0.37px;">INTV-0001</span>
<svg style="left:491.2px;top:531.4px" width="23" height="16" viewBox="0 0 23 16"><path d="M0.500 9.500L2.500 15.600 13 14.600 17.500 8z" fill="#6b6b6b"/><path d="M0.500 9.500L6 1 18 1.500 16.800 8.200 12.500 12.200 1.500 11.800z" fill="#cdcdcd"/><ellipse cx="9.800" cy="5.600" rx="3.800" ry="2.400" fill="#45aee6"/><ellipse cx="19.600" cy="7.400" rx="2.800" ry="2.100" fill="#f0902e"/></svg>
<span class="t" style="left:521.2px;top:557.4px;font-size:13px;color:#0f2a55;letter-spacing:-0.37px;">INTV-0004</span>
<svg style="left:491.2px;top:563.4px" width="23" height="16" viewBox="0 0 23 16"><path d="M0.500 9.500L2.500 15.600 13 14.600 17.500 8z" fill="#6b6b6b"/><path d="M0.500 9.500L6 1 18 1.500 16.800 8.200 12.500 12.200 1.500 11.800z" fill="#cdcdcd"/><ellipse cx="9.800" cy="5.600" rx="3.800" ry="2.400" fill="#45aee6"/><ellipse cx="19.600" cy="7.400" rx="2.800" ry="2.100" fill="#f0902e"/></svg>
</div></body></html>
